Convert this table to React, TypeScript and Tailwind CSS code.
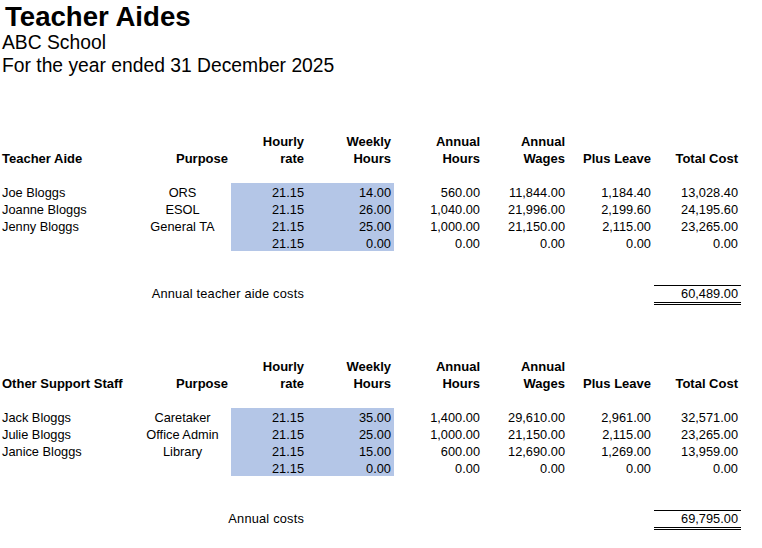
const cols = "grid grid-cols-[134px_97px_76px_87px_89px_85px_86px_87px]";

type Row = [string, string, string, string, string, string, string, string];

const sections: { heading: string; label: string; total: string; rows: Row[] }[] = [
  {
    heading: "Teacher Aide",
    label: "Annual teacher aide costs",
    total: "60,489.00",
    rows: [
      ["Joe Bloggs", "ORS", "21.15", "14.00", "560.00", "11,844.00", "1,184.40", "13,028.40"],
      ["Joanne Bloggs", "ESOL", "21.15", "26.00", "1,040.00", "21,996.00", "2,199.60", "24,195.60"],
      ["Jenny Bloggs", "General TA", "21.15", "25.00", "1,000.00", "21,150.00", "2,115.00", "23,265.00"],
      ["", "", "21.15", "0.00", "0.00", "0.00", "0.00", "0.00"],
    ],
  },
  {
    heading: "Other Support Staff",
    label: "Annual costs",
    total: "69,795.00",
    rows: [
      ["Jack Bloggs", "Caretaker", "21.15", "35.00", "1,400.00", "29,610.00", "2,961.00", "32,571.00"],
      ["Julie Bloggs", "Office Admin", "21.15", "25.00", "1,000.00", "21,150.00", "2,115.00", "23,265.00"],
      ["Janice Bloggs", "Library", "21.15", "15.00", "600.00", "12,690.00", "1,269.00", "13,959.00"],
      ["", "", "21.15", "0.00", "0.00", "0.00", "0.00", "0.00"],
    ],
  },
];

function Header({ heading }: { heading: string }) {
  const cell = "flex h-[35px] flex-col justify-end text-right pr-[3px] leading-[17px]";
  return (
    <div className={`${cols} text-[13px] font-bold`}>
      <div className="flex h-[35px] flex-col justify-end whitespace-nowrap pl-[2px] leading-[17px]">{heading}</div>
      <div className={cell}>Purpose</div>
      <div className={cell}>
        <span>Hourly</span>
        <span>rate</span>
      </div>
      <div className={cell}>
        <span>Weekly</span>
        <span>Hours</span>
      </div>
      <div className={cell}>
        <span>Annual</span>
        <span>Hours</span>
      </div>
      <div className={cell}>
        <span>Annual</span>
        <span>Wages</span>
      </div>
      <div className={cell}>Plus Leave</div>
      <div className={cell}>Total Cost</div>
    </div>
  );
}

function DataRow({ row }: { row: Row }) {
  const num = "h-[17px] pr-[3px] text-right leading-[19px]";
  return (
    <div className={`${cols} text-[12.8px]`}>
      <div className="h-[17px] whitespace-nowrap pl-[2px] leading-[19px]">{row[0]}</div>
      <div className="h-[17px] text-center leading-[19px]">{row[1]}</div>
      <div className={`${num} bg-[#b4c6e7]`}>{row[2]}</div>
      <div className={`${num} bg-[#b4c6e7]`}>{row[3]}</div>
      <div className={num}>{row[4]}</div>
      <div className={num}>{row[5]}</div>
      <div className={num}>{row[6]}</div>
      <div className={num}>{row[7]}</div>
    </div>
  );
}

export default function App() {
  return (
    <div className="min-h-[548px] w-[762px] bg-white text-black font-['Liberation_Sans',Arial,sans-serif]">
      <div className="h-[31px] pl-[5px] text-[27.6px] font-bold leading-[33px]">Teacher Aides</div>
      <div className="h-[23px] pl-[2px] text-[19.3px] leading-[23px]">ABC School</div>
      <div className="h-[23px] pl-[2px] text-[19.3px] leading-[23px]">For the year ended 31 December 2025</div>

      {sections.map((s, i) => (
        <div key={s.heading} className={i === 0 ? "pt-[55px]" : "pt-[52px]"}>
          <Header heading={s.heading} />
          <div className="h-[16px]" />
          {s.rows.map((r, j) => (
            <DataRow key={j} row={r} />
          ))}
          <div className="h-[34px]" />
          <div className={`${cols} text-[12.8px]`}>
            <div className="col-span-3 h-[20px] whitespace-nowrap pr-[3px] pt-[1px] text-right leading-[15px] tracking-[0.2px]">
              {s.label}
            </div>
            <div className="col-span-4" />
            <div className="h-[20px] border-t border-b-[3px] border-double border-t-solid border-black pr-[3px] text-right leading-[15px]">
              {s.total}
            </div>
          </div>
        </div>
      ))}
    </div>
  );
}
